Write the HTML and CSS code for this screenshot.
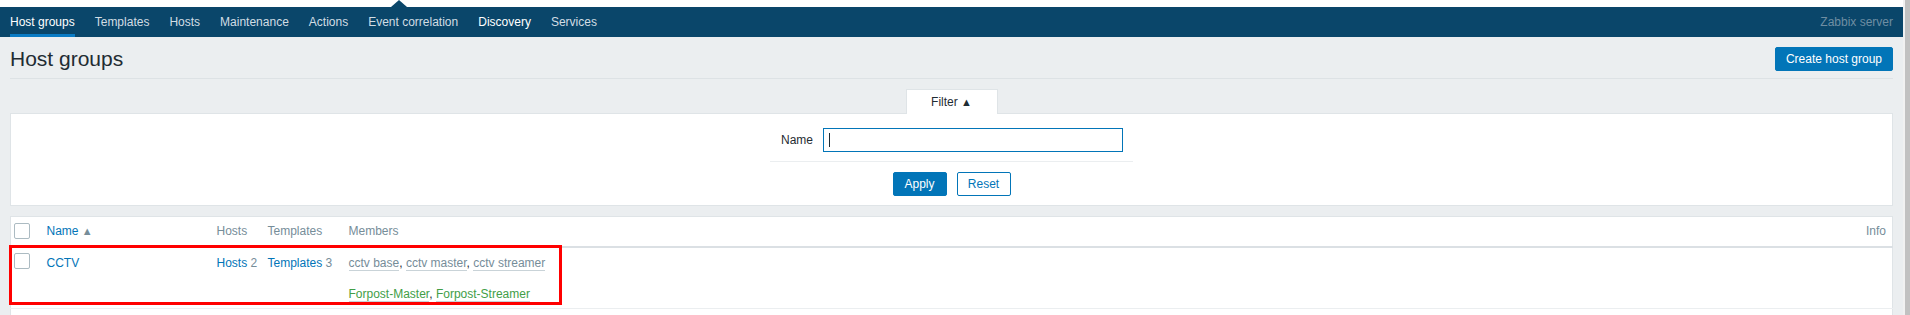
FILE: index.html
```html
<!DOCTYPE html>
<html lang="en">
<head>
    <meta charset="UTF-8">
    <title>Host groups</title>
    <link rel="stylesheet" href="styles.css">
</head>
<body>
<div class="window">
<div class="page">
    <div class="top-strip"><span class="notch"></span></div>
    <nav class="subnav">
        <ul class="subnav-list">
            <li><a class="selected" href="#">Host groups</a></li>
            <li><a href="#">Templates</a></li>
            <li><a href="#">Hosts</a></li>
            <li><a href="#">Maintenance</a></li>
            <li><a href="#">Actions</a></li>
            <li><a href="#">Event correlation</a></li>
            <li><a class="hover" href="#">Discovery</a></li>
            <li><a href="#">Services</a></li>
        </ul>
        <span class="server-name">Zabbix server</span>
    </nav>

    <main class="content">
        <header class="header-title">
            <h1>Host groups</h1>
            <button class="btn">Create host group</button>
        </header>

        <div class="filter">
            <div class="filter-tabs">
                <span class="filter-tab">Filter <span class="arrow">&#9650;</span></span>
            </div>
            <div class="filter-panel">
                <div class="filter-form">
                    <label for="filter_name" class="filter-label">Name</label>
                    <div class="filter-field">
                        <div class="input-box"><span class="caret"></span></div>
                    </div>
                </div>
                <div class="filter-buttons">
                    <button class="btn btn-apply">Apply</button>
                    <button class="btn btn-alt">Reset</button>
                </div>
            </div>
        </div>

        <div class="list-wrap">
            <table class="list-table">
                <thead>
                    <tr>
                        <th class="col-check"><span class="checkbox"></span></th>
                        <th class="col-name"><a href="#">Name</a> <span class="sort">&#9650;</span></th>
                        <th class="col-hosts">Hosts</th>
                        <th class="col-templates">Templates</th>
                        <th class="col-members">Members</th>
                        <th class="col-info">Info</th>
                    </tr>
                </thead>
                <tbody>
                    <tr>
                        <td class="col-check"><span class="checkbox"></span></td>
                        <td class="col-name"><a href="#">CCTV</a></td>
                        <td class="col-hosts"><a href="#">Hosts</a> <span class="count">2</span></td>
                        <td class="col-templates"><a href="#">Templates</a> <span class="count">3</span></td>
                        <td class="col-members">
                            <div class="line">
                                <a class="grey" href="#">cctv base</a>, <a class="grey" href="#">cctv master</a>, <a class="grey" href="#">cctv streamer</a>
                            </div>
                            <div class="line second">
                                <a class="green" href="#">Forpost-Master</a>, <a class="green" href="#">Forpost-Streamer</a>
                            </div>
                        </td>
                        <td class="col-info"></td>
                    </tr>
                    <tr class="filler">
                        <td colspan="6"></td>
                    </tr>
                </tbody>
            </table>
            <div class="highlight"></div>
        </div>
    </main>
</div>
<div class="scrollbar"><div class="thumb"></div></div>
</div>
</body>
</html>
```

FILE: styles.css
```css
* {
    box-sizing: border-box;
}

html, body {
    margin: 0;
    padding: 0;
    height: 100%;
    overflow: hidden;
}

body {
    font-family: 'Liberation Sans', Arial, sans-serif;
    font-size: 12px;
    color: #1f2c33;
    background-color: #ebeef0;
}

.window {
    display: flex;
    height: 100%;
}

.page {
    flex: 1;
    min-width: 0;
}

.scrollbar {
    width: 7px;
    background-color: #f1f1f1;
    display: flex;
    justify-content: flex-end;
}

.scrollbar .thumb {
    width: 5px;
    background-color: #c1c1c1;
}

/* top strip with menu pointer */
.top-strip {
    height: 7px;
    background-color: #fff;
    position: relative;
}

.notch {
    position: absolute;
    left: 391px;
    bottom: 0;
    width: 0;
    height: 0;
    border-left: 8px solid transparent;
    border-right: 8px solid transparent;
    border-bottom: 7px solid #0a466a;
}

.subnav {
    background-color: #0a466a;
    height: 30px;
    display: flex;
    align-items: center;
    justify-content: space-between;
    padding-right: 10px;
}

.subnav-list {
    list-style: none;
    margin: 0;
    padding: 0;
    display: flex;
    height: 100%;
}

.subnav-list a {
    display: block;
    height: 30px;
    padding: 8px 10px;
    line-height: 14px;
    color: #d2dde4;
    text-decoration: none;
}

.subnav-list a.selected {
    color: #fff;
    background: linear-gradient(#0a7bc4, #0a7bc4) 10px 100% / calc(100% - 20px) 3px no-repeat;
}

.subnav-list a.hover {
    color: #fff;
}

.server-name {
    color: #6f8ea3;
}

/* content */
.content {
    padding: 0 10px;
}

.header-title {
    display: flex;
    justify-content: space-between;
    align-items: center;
    padding: 10px 0 7px;
    border-bottom: 1px solid #dde2e5;
}

.header-title h1 {
    margin: 0;
    font-size: 21px;
    line-height: 24px;
    font-weight: normal;
    color: #1f2c33;
}

.btn {
    font-family: inherit;
    font-size: 12px;
    height: 24px;
    padding: 0 10px;
    background-color: #0275b8;
    color: #fff;
    border: 1px solid #0275b8;
    border-radius: 2px;
    cursor: pointer;
}

.btn-alt {
    background-color: #fff;
    color: #0275b8;
}

/* filter */
.filter {
    margin-top: 10px;
}

.filter-tabs {
    display: flex;
    justify-content: center;
}

.filter-tab {
    width: 92px;
    height: 25px;
    margin-bottom: -1px;
    background-color: #fff;
    border: 1px solid #dfe4e7;
    border-bottom: none;
    text-align: center;
    line-height: 24px;
    position: relative;
}

.filter-tab .arrow {
    font-size: 11px;
    vertical-align: 0;
}

.filter-panel {
    background-color: #fff;
    border: 1px solid #dfe4e7;
    padding: 14px 0 9px;
    display: flex;
    flex-direction: column;
    align-items: center;
}

.filter-form {
    display: flex;
    align-items: center;
    width: 363px;
    padding-bottom: 9px;
    border-bottom: 1px solid #ebeef0;
}

.filter-label {
    width: 53px;
    padding-right: 10px;
    text-align: right;
}

.input-box {
    width: 300px;
    height: 24px;
    border: 1px solid #0275b8;
    background-color: #fff;
    padding: 4px 5px;
}

.caret {
    display: block;
    width: 1px;
    height: 14px;
    background-color: #1f2c33;
}

.filter-buttons {
    display: flex;
    gap: 10px;
    padding-top: 10px;
}

.filter-buttons .btn {
    width: 54px;
}

/* list table */
.list-wrap {
    margin-top: 10px;
    position: relative;
}

.list-table {
    width: 100%;
    border-collapse: collapse;
    background-color: #fff;
    border: 1px solid #dfe4e7;
}

.list-table th {
    height: 30px;
    padding: 0 5px;
    text-align: left;
    font-weight: normal;
    color: #768d99;
    border-bottom: 2px solid #dbe0e4;
    vertical-align: middle;
}

.list-table td {
    padding: 6px 5px 5px;
    vertical-align: top;
    line-height: 18px;
    border-bottom: 1px solid #ebeef0;
}

.list-table a {
    color: #0275b8;
    text-decoration: none;
}

.list-table .col-check {
    width: 31px;
    padding-left: 3px;
}

.list-table td.col-check {
    padding-top: 5px;
}

.col-name {
    width: 170px;
}

.col-hosts {
    width: 51px;
}

.col-templates {
    width: 81px;
}

.list-table .col-info {
    text-align: right;
    padding-right: 6px;
}

.checkbox {
    display: block;
    width: 16px;
    height: 16px;
    border: 1px solid #acbbc2;
    border-radius: 2px;
    background-color: #fff;
}

.sort {
    font-size: 11px;
    color: #768d99;
}

.count {
    color: #768d99;
}

.list-table a.grey {
    color: #768d99;
    border-bottom: 1px solid #c9d3d8;
}

.list-table a.green {
    color: #429e47;
    border-bottom: 1px solid #c9d3d8;
}

.line.second {
    margin-top: 13px;
}

.filler td {
    height: 30px;
    border-bottom: none;
}

.highlight {
    position: absolute;
    left: -1px;
    top: 29px;
    width: 553px;
    height: 60px;
    border: 3px solid #ff0000;
    pointer-events: none;
}
```
